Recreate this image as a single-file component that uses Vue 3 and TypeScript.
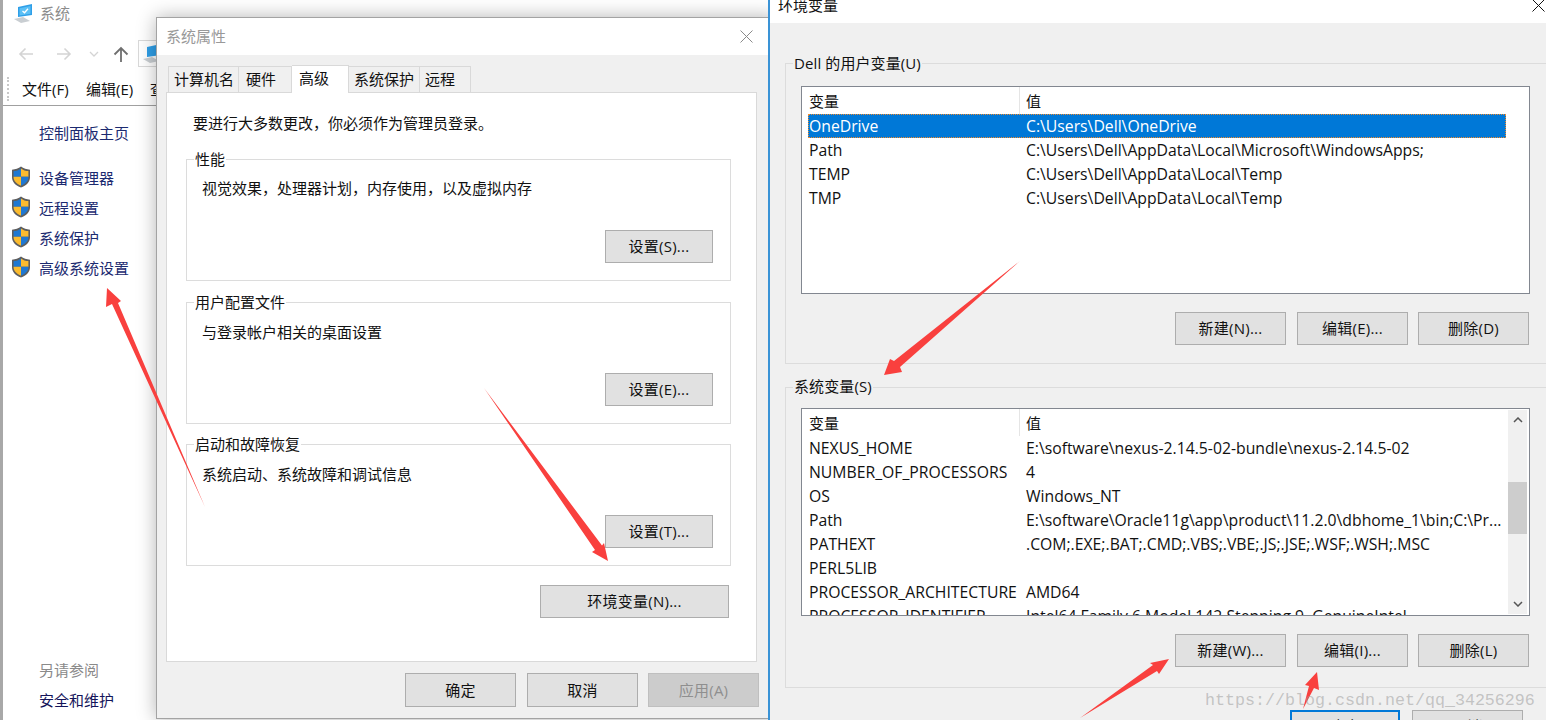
<script setup lang="ts">
interface Row { name: string; value: string; selected?: boolean }
interface Group { label: string; text: string; btn: string }

const tabs = [
  { label: '计算机名', w: 71, pad: 5 },
  { label: '硬件', w: 53, pad: 7 },
  { label: '高级', w: 57, pad: 7, active: true },
  { label: '系统保护', w: 71, pad: 5 },
  { label: '远程', w: 51, pad: 5 },
]
const sideLinks = ['设备管理器', '远程设置', '系统保护', '高级系统设置']
const groups: Group[] = [
  { label: '性能', text: '视觉效果，处理器计划，内存使用，以及虚拟内存', btn: '设置(S)...' },
  { label: '用户配置文件', text: '与登录帐户相关的桌面设置', btn: '设置(E)...' },
  { label: '启动和故障恢复', text: '系统启动、系统故障和调试信息', btn: '设置(T)...' },
]
const userRows: Row[] = [
  { name: 'OneDrive', value: 'C:\\Users\\Dell\\OneDrive', selected: true },
  { name: 'Path', value: 'C:\\Users\\Dell\\AppData\\Local\\Microsoft\\WindowsApps;' },
  { name: 'TEMP', value: 'C:\\Users\\Dell\\AppData\\Local\\Temp' },
  { name: 'TMP', value: 'C:\\Users\\Dell\\AppData\\Local\\Temp' },
]
const sysRows: Row[] = [
  { name: 'NEXUS_HOME', value: 'E:\\software\\nexus-2.14.5-02-bundle\\nexus-2.14.5-02' },
  { name: 'NUMBER_OF_PROCESSORS', value: '4' },
  { name: 'OS', value: 'Windows_NT' },
  { name: 'Path', value: 'E:\\software\\Oracle11g\\app\\product\\11.2.0\\dbhome_1\\bin;C:\\Pr...' },
  { name: 'PATHEXT', value: '.COM;.EXE;.BAT;.CMD;.VBS;.VBE;.JS;.JSE;.WSF;.WSH;.MSC' },
  { name: 'PERL5LIB', value: '' },
  { name: 'PROCESSOR_ARCHITECTURE', value: 'AMD64' },
  { name: 'PROCESSOR_IDENTIFIER', value: 'Intel64 Family 6 Model 142 Stepping 9, GenuineIntel' },
]
const arrows = [
  '205,507 118,303 121,301 107,288 106,307 112,304',
  '484,388 602,545.5 604,543 608,561 592,552 595,550',
  '1020,261 900,367 902,372 884,375 890,359 894,361',
  '1080,718 1153,665 1150,663 1169,659 1159,674 1157,671',
  '1303,709 1309,686 1305,685 1317,672 1319,690 1314,688',
]
</script>

<template>
  <div class="desktop">
    <section class="win-back">
      <header class="back-title">
        <svg class="pc" viewBox="0 0 22 20" width="22" height="20">
          <path d="M5 3 19 0v11L5 13z" fill="#2f9fe8" />
          <path d="M6.5 4.2 17.5 2v7.8L6.500 11.500z" fill="#5cc0f5" />
          <path d="m9.500 7 2 1.800 3.500-4" fill="none" stroke="#fff" stroke-width="1.300" />
          <path d="M1 15 10 13l7 4-9 2z" fill="#c9ced2" />
        </svg>
        <span>系统</span>
      </header>
      <div class="nav">
        <svg viewBox="0 0 16 14" width="16" height="14"><path d="M15 7H2M7.500 1.500 2 7l5.500 5.500" fill="none" stroke="#d4d4d4" stroke-width="1.600" /></svg>
        <svg viewBox="0 0 16 14" width="16" height="14"><path d="M1 7h13M8.500 1.500 14 7l-5.500 5.500" fill="none" stroke="#d4d4d4" stroke-width="1.600" /></svg>
        <svg viewBox="0 0 10 6" width="10" height="6"><path d="m1 1 4 4 4-4" fill="none" stroke="#d4d4d4" stroke-width="1.300" /></svg>
        <svg viewBox="0 0 16 16" width="16" height="16"><path d="M8 16V2M1.500 8.500 8 2l6.500 6.500" fill="none" stroke="#6f6f6f" stroke-width="1.800" /></svg>
        <div class="crumb">
          <svg viewBox="0 0 22 20" width="22" height="20">
            <path d="M5 3 19 0v11L5 13z" fill="#2f9fe8" />
            <path d="M1 15 10 13l7 4-9 2z" fill="#c9ced2" />
          </svg>
        </div>
      </div>
      <nav class="menu">
        <span class="grip"></span>
        <span class="menu-item">文件(F)</span>
        <span class="menu-item">编辑(E)</span>
        <span class="menu-item">查看(V)</span>
      </nav>
      <aside class="side">
        <a class="home">控制面板主页</a>
        <ul class="side-list">
          <li v-for="link in sideLinks" :key="link">
            <svg viewBox="0 0 20 22" width="20" height="22">
              <path d="M10 .6C7.500 2.600 4.500 3.500 1 3.700v7.500c0 4.800 3.600 8.300 9 10.300 5.400-2 9-5.500 9-10.300V3.700C15.500 3.500 12.500 2.600 10 .6z" fill="#5e5e5e" />
              <path d="M10 2.400v8.300H2.600V5.100C5.400 4.900 7.900 4 10 2.400z" fill="#1f78d1" />
              <path d="M10 2.400c2.100 1.600 4.600 2.500 7.400 2.700v5.600H10z" fill="#fbbb2e" />
              <path d="M2.600 10.700H10v9C5.700 18 2.700 15 2.600 11.200z" fill="#fbbb2e" />
              <path d="M10 10.700h7.400v.5c-.1 3.800-3.100 6.800-7.400 8.500z" fill="#1f78d1" />
            </svg>
            <a>{{ link }}</a>
          </li>
        </ul>
        <div class="see-also">
          <span class="see-title">另请参阅</span>
          <a class="see-link">安全和维护</a>
        </div>
      </aside>
    </section>

    <section class="win-sys">
      <header class="sys-title">
        <span>系统属性</span>
        <svg viewBox="0 0 13 13" width="13" height="13"><path d="m.5.500 12 12m0-12-12 12" stroke="#8a8a8a" fill="none" /></svg>
      </header>
      <div class="sys-body">
        <div class="tabs">
          <span
            v-for="t in tabs"
            :key="t.label"
            class="tab"
            :class="{ active: t.active }"
            :style="{ width: t.w + 'px', paddingLeft: t.pad + 'px' }"
          >{{ t.label }}</span>
        </div>
        <div class="panel">
          <p class="intro">要进行大多数更改，你必须作为管理员登录。</p>
          <div v-for="g in groups" :key="g.label" class="sys-group">
            <span class="legend legend-white">{{ g.label }}</span>
            <p class="group-text">{{ g.text }}</p>
            <button class="btn btn-set">{{ g.btn }}</button>
          </div>
          <button class="btn btn-env">环境变量(N)...</button>
        </div>
        <footer class="sys-foot">
          <button class="btn">确定</button>
          <button class="btn">取消</button>
          <button class="btn disabled">应用(A)</button>
        </footer>
      </div>
    </section>

    <section class="win-env">
      <header class="env-title">
        <span>环境变量</span>
        <svg viewBox="0 0 13 13" width="13" height="13"><path d="m.5.500 12 12m0-12-12 12" stroke="#111" fill="none" /></svg>
      </header>
      <div class="env-body">
        <div class="env-group">
          <span class="legend legend-grey">Dell 的用户变量(U)</span>
          <div class="list">
            <div class="list-inner">
              <div class="list-head"><span class="c1">变量</span><span class="c2">值</span></div>
              <div v-for="r in userRows" :key="r.name" class="row" :class="{ selected: r.selected }">
                <span class="c1">{{ r.name }}</span><span class="c2">{{ r.value }}</span>
              </div>
            </div>
          </div>
          <div class="env-btns">
            <button class="btn">新建(N)...</button>
            <button class="btn">编辑(E)...</button>
            <button class="btn">删除(D)</button>
          </div>
        </div>
        <div class="env-group second">
          <span class="legend legend-grey">系统变量(S)</span>
          <div class="list">
            <div class="list-inner">
              <div class="list-head"><span class="c1">变量</span><span class="c2">值</span></div>
              <div v-for="r in sysRows" :key="r.name" class="row">
                <span class="c1">{{ r.name }}</span><span class="c2">{{ r.value }}</span>
              </div>
            </div>
            <div class="scroll">
              <svg viewBox="0 0 10 6" width="10" height="6"><path d="m1 5 4-4 4 4" fill="none" stroke="#555" stroke-width="1.500" /></svg>
              <div class="thumb"></div>
              <svg viewBox="0 0 10 6" width="10" height="6"><path d="m1 1 4 4 4-4" fill="none" stroke="#555" stroke-width="1.500" /></svg>
            </div>
          </div>
          <div class="env-btns">
            <button class="btn">新建(W)...</button>
            <button class="btn">编辑(I)...</button>
            <button class="btn">删除(L)</button>
          </div>
        </div>
        <div class="env-foot">
          <button class="btn primary">确定</button>
          <button class="btn">取消</button>
        </div>
      </div>
    </section>

    <svg class="arrows" viewBox="0 0 1546 720" width="1546" height="720">
      <polygon v-for="p in arrows" :key="p" :points="p" fill="#f9403e" />
    </svg>
    <span class="watermark">https://blog.csdn.net/qq_34256296</span>
  </div>
</template>

<style>
html, body { margin: 0; height: 720px; overflow: hidden; background: #fff; }
</style>

<style scoped>
.desktop {
  position: relative;
  width: 1546px;
  height: 720px;
  overflow: hidden;
  font-family: "Open Sans", "Noto Sans CJK SC", sans-serif;
  font-size: 15px;
  color: #111;
  background: #fff;
}
button { font: inherit; color: inherit; }
p { margin: 0; }
ul { margin: 0; padding: 0; list-style: none; }

/* back window */
.win-back {
  position: absolute;
  left: 0; top: 0;
  width: 768px;
  height: 720px;
  border-left: 3px solid #a8a8a8;
  box-sizing: border-box;
  display: flex;
  flex-direction: column;
}
.back-title { height: 28px; display: flex; align-items: center; gap: 5px; padding-left: 10px; color: #8c8c8c; }
.back-title span { margin-bottom: 4px; }
.nav { height: 46px; display: flex; align-items: center; padding: 5px 0 0 15px; box-sizing: border-box; }
.nav svg:nth-child(2) { margin-left: 22px; }
.nav svg:nth-child(3) { margin-left: 17px; }
.nav svg:nth-child(4) { margin-left: 14px; }
.crumb { margin-left: 9px; width: 40px; height: 27px; box-sizing: border-box; border: 1px solid #d9d9d9; display: flex; align-items: center; padding-left: 3px; }
.menu { height: 31px; border-bottom: 1px solid #a0a0a0; display: flex; align-items: center; position: relative; padding: 0 0 3px 19px; box-sizing: border-box; height: 32px; }
.grip { position: absolute; left: 4px; top: 3px; height: 24px; border-left: 2px dotted #c8c8c8; }
.menu-item { width: 64px; white-space: nowrap; }
.side { flex: 1; display: flex; flex-direction: column; padding-left: 36px; color: #1b2a70; }
.home { margin-top: 15px; line-height: 24px; }
.side-list { margin-top: 17px; margin-left: -28px; }
.side-list li { height: 30px; display: flex; align-items: center; gap: 8px; }
.see-also { margin-top: auto; display: flex; flex-direction: column; padding-bottom: 5px; }
.see-title { color: #8a8a8a; line-height: 30px; }
.see-link { color: #14145a; line-height: 30px; }

/* system properties */
.win-sys {
  position: absolute;
  left: 156px; top: 17px;
  width: 620px;
  height: 702px;
  box-sizing: border-box;
  border: 1px solid #a3a3a3;
  background: #f0f0f0;
  box-shadow: 0 0 18px rgba(0,0,0,.3);
  display: flex;
  flex-direction: column;
}
.sys-title {
  height: 36px;
  background: #fff;
  display: flex;
  align-items: center;
  justify-content: space-between;
  padding: 1px 22px 0 9px;
  color: #999;
  flex: none;
}
.sys-title span { margin-bottom: 4px; }
.sys-title svg { margin-bottom: 2px; }
.sys-body { flex: 1; display: flex; flex-direction: column; padding: 0 19px 0 9px; }
.tabs { display: flex; height: 38px; align-items: flex-end; padding-left: 2px; margin-bottom: -1px; position: relative; z-index: 1; }
.tab {
  box-sizing: border-box;
  height: 26px;
  line-height: 24px;
  white-space: nowrap;
  background: #f0f0f0;
  border: 1px solid #d9d9d9;
  border-left-width: 0;
  border-bottom: 0;
  margin-bottom: 1px;
}
.tab:first-child { border-left-width: 1px; }
.tab.active { height: 28px; background: #fff; margin-bottom: 0; padding-bottom: 2px; }
.panel {
  box-sizing: border-box;
  width: 591px;
  height: 570px;
  background: #fff;
  border: 1px solid #d9d9d9;
  padding: 18px 0 0 19px;
  display: flex;
  flex-direction: column;
}
.intro { margin-left: 7px; line-height: 24px; margin-bottom: 24px; }
.sys-group {
  position: relative;
  box-sizing: border-box;
  width: 545px;
  height: 122px;
  border: 1px solid #dcdcdc;
  margin-bottom: 21px;
  padding: 17px 17px 0 15px;
  display: flex;
  flex-direction: column;
}
.sys-group:nth-of-type(1) { padding-top: 16px; }
.sys-group:nth-of-type(2) { margin-bottom: 20px; }
.sys-group:nth-of-type(3) { margin-bottom: 19px; }
.legend {
  position: absolute;
  left: 7px; top: -11px;
  line-height: 20px;
  padding: 0 1px;
  white-space: nowrap;
}
.legend-white { background: #fff; }
.legend-grey { background: #f0f0f0; letter-spacing: .1px; }
.second .legend { top: -12px; }
.group-text { line-height: 24px; }
.btn {
  box-sizing: border-box;
  width: 111px;
  height: 33px;
  padding: 0 0 2px;
  background: #e1e1e1;
  border: 1px solid #adadad;
  white-space: nowrap;
  letter-spacing: .25px;
  flex: none;
}
.btn-set { width: 108px; margin-top: auto; margin-bottom: 17px; align-self: flex-end; }
.btn-env { width: 189px; align-self: flex-start; margin-left: 354px; }
.disabled { color: #8f8f8f; background: #ccc; border-color: #bfbfbf; }
.sys-foot { display: flex; gap: 11px; margin-top: 11px; padding-left: 239px; }
.sys-foot .btn { height: 34px; }
.sys-foot .btn:last-child { margin-left: -1px; }

/* env window */
.win-env {
  position: absolute;
  left: 768px; top: -14px;
  width: 778px;
  height: 760px;
  box-sizing: border-box;
  border-left: 2px solid #3a93d6;
  background: #f0f0f0;
  display: flex;
  flex-direction: column;
}
.env-title {
  height: 37px;
  flex: none;
  background: #fff;
  display: flex;
  align-items: flex-end;
  justify-content: space-between;
  padding: 0 0 6px 8px;
  box-sizing: border-box;
  color: #111;
  line-height: 24px;
}
.env-title svg { margin: 0 0 5px; position: relative; left: -1px; }
.env-body { padding: 40px 0 0 15px; display: flex; flex-direction: column; flex: 1; }
.env-group {
  position: relative;
  box-sizing: border-box;
  height: 301px;
  margin-right: -2px;
  border: 1px solid #dcdcdc;
  border-right: 0;
  padding: 22px 18px 0 15px;
  display: flex;
  flex-direction: column;
}
.env-group.second { margin-top: 23px; height: 301px; padding-top: 20px; }
.list {
  box-sizing: border-box;
  height: 208px;
  border: 1px solid #828790;
  background: #fff;
  display: flex;
  overflow: hidden;
}
.list-inner { flex: 1; overflow: hidden; padding-left: 6px; min-width: 0; }
.list-head { display: flex; height: 27px; line-height: 29px; position: relative; }
.list-head .c1 { border-right: 1px solid #e5e5e5; }
.list-head .c2 { padding-left: 6px; }
.env-group:first-of-type .list-inner { padding-right: 23px; }
.row { display: flex; height: 24px; line-height: 24px; white-space: nowrap; font-size: 15.75px; }
.c1 { width: 212px; box-sizing: border-box; padding-left: 1px; flex: none; white-space: nowrap; }
.c2 { padding-left: 6px; white-space: nowrap; }
.row.selected { background: #0078d7; color: #fff; outline: 1px dotted #f08a2c; outline-offset: -1px; }
.scroll {
  width: 19px;
  margin: 1px 2px 1px 0;
  background: #f0f0f0;
  flex: none;
  display: flex;
  flex-direction: column;
  align-items: center;
  padding: 7px 0;
  box-sizing: border-box;
  position: relative;
}
.thumb { position: absolute; left: 0; right: 0; top: 72px; height: 52px; background: #cdcdcd; }
.scroll svg:last-child { margin-top: auto; }
.env-btns { display: flex; gap: 11px; margin-top: 18px; justify-content: flex-end; margin-right: 1px; }
.env-btns .btn:last-child { margin-left: -1px; }
.env-foot { display: flex; gap: 12px; margin-top: 22px; padding-left: 505px; }
.primary { border: 2px solid #0078d7; width: 110px; }

.arrows { position: absolute; left: 0; top: 0; pointer-events: none; }
.watermark {
  position: absolute;
  left: 1205px;
  top: 691px;
  font-family: "Liberation Mono", monospace;
  font-size: 16.67px;
  line-height: 20px;
  color: rgba(150,150,150,.5);
  white-space: nowrap;
}
</style>
